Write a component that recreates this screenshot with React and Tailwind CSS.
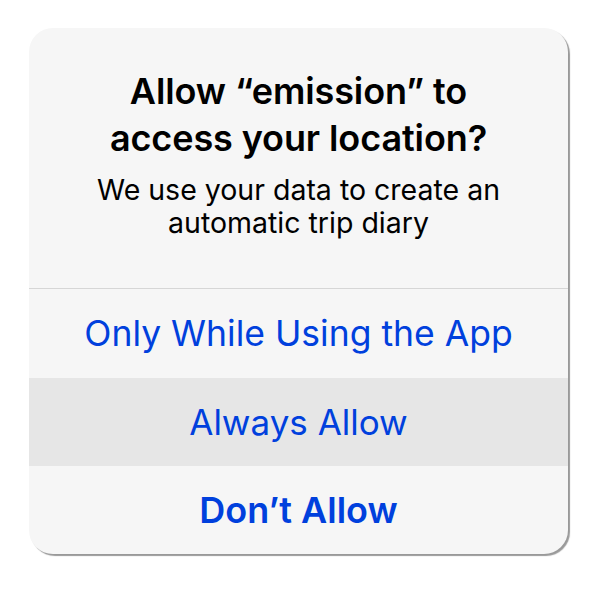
export default function App() {
  const font = { fontFamily: 'Inter, "Noto Sans", sans-serif' };
  return (
    <div className="w-[598px] h-[590px] bg-white pt-[28px] pl-[29px]" style={font}>
      <div className="w-[539px] rounded-[24px] bg-[#f6f6f6] overflow-hidden shadow-[2px_2px_1px_rgba(0,0,0,0.4)]">
        <div className="flex flex-col items-center pt-[40px] pb-[49px] px-4 text-center">
          <h1 className="text-[36px] leading-[47px] font-semibold text-black tracking-[-0.1px]">
            Allow “emission” to
            <br />
            access your location?
          </h1>
          <p className="text-[28.5px] leading-[33px] text-black mt-[11px]">
            We use your data to create an
            <br />
            automatic trip diary
          </p>
        </div>
        <div className="h-px bg-[#d6d6d6]" />
        <button className="w-full h-[89px] flex items-center justify-center text-[35.5px] text-[#0040dd]">
          Only While Using the App
        </button>
        <button className="w-full h-[88px] flex items-center justify-center text-[35px] text-[#0040dd] bg-[#e6e6e6]">
          Always Allow
        </button>
        <button className="w-full h-[88px] flex items-center justify-center text-[36px] font-semibold text-[#0040dd]">
          Don’t Allow
        </button>
      </div>
    </div>
  );
}
